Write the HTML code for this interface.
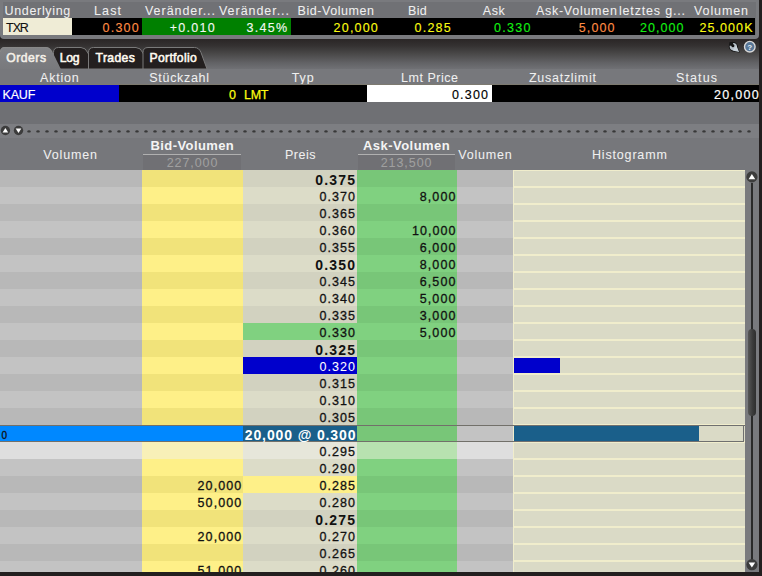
<!DOCTYPE html><html><head><meta charset="utf-8"><style>
html,body{margin:0;padding:0;width:762px;height:576px;overflow:hidden;background:#231f1f}
div,svg{position:absolute;box-sizing:border-box}
.t{white-space:nowrap;font-family:"Liberation Sans",sans-serif}
</style></head><body>
<div style="left:0px;top:0px;width:762px;height:576px;background:#231f1f;"></div>
<div style="left:0;top:0;width:758.5px;height:38.5px;background:#797a7e;border-radius:0 0 4px 4px"></div>
<div style="left:2.5px;top:1.5px;width:753.5px;height:33.5px;background:#707175;"></div>
<div style="left:3px;top:18px;width:69px;height:17px;background:#efecd6;"></div>
<div style="left:72px;top:18px;width:70px;height:17px;background:#000;"></div>
<div style="left:142px;top:18px;width:149px;height:17px;background:#008000;"></div>
<div style="left:291px;top:18px;width:464px;height:17px;background:#000;"></div>
<div class="t" style="left:4.50px;top:4.48px;font-size:12.5px;line-height:14.37px;letter-spacing:0.672px;color:#f0f0f0;-webkit-text-stroke:0.05px #f0f0f0;">Underlying</div>
<div class="t" style="left:94.00px;top:4.48px;font-size:12.5px;line-height:14.37px;letter-spacing:1.125px;color:#f0f0f0;-webkit-text-stroke:0.05px #f0f0f0;">Last</div>
<div class="t" style="left:145.00px;top:4.48px;font-size:12.5px;line-height:14.37px;letter-spacing:0.956px;color:#f0f0f0;-webkit-text-stroke:0.05px #f0f0f0;">Veränder...</div>
<div class="t" style="left:219.00px;top:4.48px;font-size:12.5px;line-height:14.37px;letter-spacing:0.956px;color:#f0f0f0;-webkit-text-stroke:0.05px #f0f0f0;">Veränder...</div>
<div class="t" style="left:297.50px;top:4.48px;font-size:12.5px;line-height:14.37px;letter-spacing:0.562px;color:#f0f0f0;-webkit-text-stroke:0.05px #f0f0f0;">Bid-Volumen</div>
<div class="t" style="left:408.00px;top:4.48px;font-size:12.5px;line-height:14.37px;letter-spacing:0.319px;color:#f0f0f0;-webkit-text-stroke:0.05px #f0f0f0;">Bid</div>
<div class="t" style="left:482.80px;top:4.48px;font-size:12.5px;line-height:14.37px;letter-spacing:0.562px;color:#f0f0f0;-webkit-text-stroke:0.05px #f0f0f0;">Ask</div>
<div class="t" style="left:535.90px;top:4.48px;font-size:12.5px;line-height:14.37px;letter-spacing:0.738px;color:#f0f0f0;-webkit-text-stroke:0.05px #f0f0f0;">Ask-Volumen</div>
<div class="t" style="left:619.00px;top:4.48px;font-size:12.5px;line-height:14.37px;letter-spacing:0.818px;color:#f0f0f0;-webkit-text-stroke:0.05px #f0f0f0;">letztes g...</div>
<div class="t" style="left:694.00px;top:4.48px;font-size:12.5px;line-height:14.37px;letter-spacing:0.896px;color:#f0f0f0;-webkit-text-stroke:0.05px #f0f0f0;">Volumen</div>
<div class="t" style="left:6.10px;top:21.48px;font-size:12.5px;line-height:14.37px;letter-spacing:-1.100px;color:#111;-webkit-text-stroke:0.12px #111;">TXR</div>
<div class="t" style="left:102.60px;top:21.48px;font-size:12.5px;line-height:14.37px;letter-spacing:1.197px;color:#ff8c44;-webkit-text-stroke:0.12px #ff8c44;">0.300</div>
<div class="t" style="left:169.70px;top:21.48px;font-size:12.5px;line-height:14.37px;letter-spacing:1.308px;color:#f4f8f4;-webkit-text-stroke:0.12px #f4f8f4;">+0.010</div>
<div class="t" style="left:246.50px;top:21.48px;font-size:12.5px;line-height:14.37px;letter-spacing:1.266px;color:#f4f8f4;-webkit-text-stroke:0.12px #f4f8f4;">3.45%</div>
<div class="t" style="left:333.60px;top:21.48px;font-size:12.5px;line-height:14.37px;letter-spacing:1.190px;color:#fcfc10;-webkit-text-stroke:0.12px #fcfc10;">20,000</div>
<div class="t" style="left:414.60px;top:21.48px;font-size:12.5px;line-height:14.37px;letter-spacing:1.197px;color:#fcfc10;-webkit-text-stroke:0.12px #fcfc10;">0.285</div>
<div class="t" style="left:494.00px;top:21.48px;font-size:12.5px;line-height:14.37px;letter-spacing:1.272px;color:#12f012;-webkit-text-stroke:0.12px #12f012;">0.330</div>
<div class="t" style="left:578.70px;top:21.48px;font-size:12.5px;line-height:14.37px;letter-spacing:1.147px;color:#ff8c44;-webkit-text-stroke:0.12px #ff8c44;">5,000</div>
<div class="t" style="left:640.00px;top:21.48px;font-size:12.5px;line-height:14.37px;letter-spacing:1.050px;color:#12f012;-webkit-text-stroke:0.12px #12f012;">20,000</div>
<div class="t" style="left:699.40px;top:21.48px;font-size:12.5px;line-height:14.37px;letter-spacing:1.090px;color:#fcfc10;-webkit-text-stroke:0.12px #fcfc10;">25.000K</div>
<div style="left:0;top:38.5px;width:759px;height:30px;background:linear-gradient(#2a2626 0%,#343131 22%,#4a4949 50%,#616164 78%,#707175 100%)"></div>
<svg style="position:absolute;left:0;top:0" width="762" height="576">
<path d="M53.5,69 L53.5,52.5 Q53.5,47.5 58.5,47.5 L81,47.5 Q85.5,47.5 88,53 L95,69 Z" fill="#231f1f" stroke="#7a7a7a" stroke-width="1"/>
<path d="M88.5,69 L88.5,52.5 Q88.5,47.5 93.5,47.5 L136,47.5 Q140.5,47.5 143,53 L150,69 Z" fill="#231f1f" stroke="#7a7a7a" stroke-width="1"/>
<path d="M143,69 L143,52.5 Q143,47.5 148,47.5 L194.5,47.5 Q199,47.5 201,52.5 L207,69 Z" fill="#231f1f" stroke="#7a7a7a" stroke-width="1"/>
<defs><linearGradient id="tg" x1="0" y1="0" x2="0" y2="1"><stop offset="0" stop-color="#828386"/><stop offset="1" stop-color="#78797d"/></linearGradient></defs>
<path d="M0,69 L0,52 Q0,47 5,47 L46,47 Q50,47 52.5,52 L60.8,69 Z" fill="url(#tg)"/>
<path d="M0.5,52 Q0.5,47.5 5,47.5 L46,47.5 Q49.7,47.5 52,52" fill="none" stroke="#888" stroke-width="1"/>
<g>
<circle cx="733.3" cy="46.6" r="4.5" fill="#121212"/>
<path d="M736.8,44.6 L739.8,52.6 L731.6,51.2 Z" fill="#121212"/>
<circle cx="733.3" cy="46.6" r="3.6" fill="#b6c0c8"/>
<path d="M736.4,45.6 L739.1,52 L732.4,50.4 Z" fill="#c8d2da"/>
<circle cx="732.9" cy="45.7" r="1.5" fill="#141414"/>
<path d="M733.6,46.2 L729.2,45.4 L729.4,42.2 L732.8,41.8 Z" fill="#151515"/>
</g>
<circle cx="749.8" cy="46.7" r="5.3" fill="#587696" stroke="#d8d8d8" stroke-width="1.4"/>
<text x="749.8" y="49.8" font-size="8" font-weight="bold" text-anchor="middle" fill="#e8eef4" font-family="Liberation Sans">?</text>
</svg>
<div class="t" style="left:6.30px;top:51.46px;font-size:12.2px;line-height:14.03px;letter-spacing:0.490px;color:#f4f0e8;-webkit-text-stroke:0.55px #f4f0e8;">Orders</div>
<div class="t" style="left:59.70px;top:51.46px;font-size:12.2px;line-height:14.03px;letter-spacing:-0.306px;color:#fffaf0;-webkit-text-stroke:0.55px #fffaf0;">Log</div>
<div class="t" style="left:95.60px;top:51.46px;font-size:12.2px;line-height:14.03px;letter-spacing:0.340px;color:#fffaf0;-webkit-text-stroke:0.55px #fffaf0;">Trades</div>
<div class="t" style="left:149.50px;top:51.46px;font-size:12.2px;line-height:14.03px;letter-spacing:0.314px;color:#fffaf0;-webkit-text-stroke:0.55px #fffaf0;">Portfolio</div>
<div style="left:0px;top:68.5px;width:759px;height:16.5px;background:#77787c;"></div>
<div class="t" style="left:40.00px;top:71.18px;font-size:12.5px;line-height:14.37px;letter-spacing:0.790px;color:#f0f0f0;-webkit-text-stroke:0.05px #f0f0f0;">Aktion</div>
<div class="t" style="left:149.30px;top:71.18px;font-size:12.5px;line-height:14.37px;letter-spacing:0.689px;color:#f0f0f0;-webkit-text-stroke:0.05px #f0f0f0;">Stückzahl</div>
<div class="t" style="left:291.70px;top:71.18px;font-size:12.5px;line-height:14.37px;letter-spacing:0.963px;color:#f0f0f0;-webkit-text-stroke:0.05px #f0f0f0;">Typ</div>
<div class="t" style="left:401.00px;top:71.18px;font-size:12.5px;line-height:14.37px;letter-spacing:0.523px;color:#f0f0f0;-webkit-text-stroke:0.05px #f0f0f0;">Lmt Price</div>
<div class="t" style="left:529.00px;top:71.18px;font-size:12.5px;line-height:14.37px;letter-spacing:0.725px;color:#f0f0f0;-webkit-text-stroke:0.05px #f0f0f0;">Zusatzlimit</div>
<div class="t" style="left:676.00px;top:71.18px;font-size:12.5px;line-height:14.37px;letter-spacing:1.113px;color:#f0f0f0;-webkit-text-stroke:0.05px #f0f0f0;">Status</div>
<div style="left:0px;top:84px;width:759px;height:1px;background:#7d7a70;"></div>
<div style="left:0px;top:85px;width:119px;height:17px;background:#0000cc;"></div>
<div style="left:119px;top:85px;width:248px;height:17px;background:#000;"></div>
<div style="left:367px;top:85px;width:125px;height:17px;background:#fff;"></div>
<div style="left:492px;top:85px;width:267px;height:17px;background:#000;"></div>
<div class="t" style="left:2.50px;top:88.28px;font-size:12.5px;line-height:14.37px;letter-spacing:-0.171px;color:#ffffff;-webkit-text-stroke:0.15px #ffffff;">KAUF</div>
<div class="t" style="left:229.00px;top:88.28px;font-size:12.5px;line-height:14.37px;letter-spacing:0.000px;color:#fcfc10;-webkit-text-stroke:0.25px #fcfc10;">0</div>
<div class="t" style="left:244.00px;top:88.28px;font-size:12.5px;line-height:14.37px;letter-spacing:-0.250px;color:#fcfc10;-webkit-text-stroke:0.25px #fcfc10;">LMT</div>
<div class="t" style="left:452.00px;top:88.28px;font-size:12.5px;line-height:14.37px;letter-spacing:1.172px;color:#000;-webkit-text-stroke:0.15px #000;">0.300</div>
<div class="t" style="left:714.00px;top:88.28px;font-size:12.5px;line-height:14.37px;letter-spacing:1.270px;color:#ffffff;-webkit-text-stroke:0.2px #ffffff;">20,000</div>
<div style="left:0px;top:102px;width:759px;height:22px;background:#6f7074;"></div>
<div style="left:0px;top:124px;width:759px;height:14px;background:#7d7e82;"></div>
<svg style="position:absolute;left:0;top:0" width="762" height="576"><circle cx="5.4" cy="130.5" r="4.7" fill="#3c3c3c"/><path d="M2.6,132.6 L8.2,132.6 L5.4,128 Z" fill="#fff"/><circle cx="18.5" cy="130.5" r="4.7" fill="#3c3c3c"/><path d="M15.7,128.4 L21.3,128.4 L18.5,133 Z" fill="#fff"/><ellipse cx="29.0" cy="131.4" rx="1.7" ry="1.2" fill="#383838"/><ellipse cx="38.0" cy="131.4" rx="1.7" ry="1.2" fill="#383838"/><ellipse cx="47.0" cy="131.4" rx="1.7" ry="1.2" fill="#383838"/><ellipse cx="56.0" cy="131.4" rx="1.7" ry="1.2" fill="#383838"/><ellipse cx="65.0" cy="131.4" rx="1.7" ry="1.2" fill="#383838"/><ellipse cx="74.0" cy="131.4" rx="1.7" ry="1.2" fill="#383838"/><ellipse cx="83.0" cy="131.4" rx="1.7" ry="1.2" fill="#383838"/><ellipse cx="92.0" cy="131.4" rx="1.7" ry="1.2" fill="#383838"/><ellipse cx="101.0" cy="131.4" rx="1.7" ry="1.2" fill="#383838"/><ellipse cx="110.0" cy="131.4" rx="1.7" ry="1.2" fill="#383838"/><ellipse cx="119.0" cy="131.4" rx="1.7" ry="1.2" fill="#383838"/><ellipse cx="128.0" cy="131.4" rx="1.7" ry="1.2" fill="#383838"/><ellipse cx="137.0" cy="131.4" rx="1.7" ry="1.2" fill="#383838"/><ellipse cx="146.0" cy="131.4" rx="1.7" ry="1.2" fill="#383838"/><ellipse cx="155.0" cy="131.4" rx="1.7" ry="1.2" fill="#383838"/><ellipse cx="164.0" cy="131.4" rx="1.7" ry="1.2" fill="#383838"/><ellipse cx="173.0" cy="131.4" rx="1.7" ry="1.2" fill="#383838"/><ellipse cx="182.0" cy="131.4" rx="1.7" ry="1.2" fill="#383838"/><ellipse cx="191.0" cy="131.4" rx="1.7" ry="1.2" fill="#383838"/><ellipse cx="200.0" cy="131.4" rx="1.7" ry="1.2" fill="#383838"/><ellipse cx="209.0" cy="131.4" rx="1.7" ry="1.2" fill="#383838"/><ellipse cx="218.0" cy="131.4" rx="1.7" ry="1.2" fill="#383838"/><ellipse cx="227.0" cy="131.4" rx="1.7" ry="1.2" fill="#383838"/><ellipse cx="236.0" cy="131.4" rx="1.7" ry="1.2" fill="#383838"/><ellipse cx="245.0" cy="131.4" rx="1.7" ry="1.2" fill="#383838"/><ellipse cx="254.0" cy="131.4" rx="1.7" ry="1.2" fill="#383838"/><ellipse cx="263.0" cy="131.4" rx="1.7" ry="1.2" fill="#383838"/><ellipse cx="272.0" cy="131.4" rx="1.7" ry="1.2" fill="#383838"/><ellipse cx="281.0" cy="131.4" rx="1.7" ry="1.2" fill="#383838"/><ellipse cx="290.0" cy="131.4" rx="1.7" ry="1.2" fill="#383838"/><ellipse cx="299.0" cy="131.4" rx="1.7" ry="1.2" fill="#383838"/><ellipse cx="308.0" cy="131.4" rx="1.7" ry="1.2" fill="#383838"/><ellipse cx="317.0" cy="131.4" rx="1.7" ry="1.2" fill="#383838"/><ellipse cx="326.0" cy="131.4" rx="1.7" ry="1.2" fill="#383838"/><ellipse cx="335.0" cy="131.4" rx="1.7" ry="1.2" fill="#383838"/><ellipse cx="344.0" cy="131.4" rx="1.7" ry="1.2" fill="#383838"/><ellipse cx="353.0" cy="131.4" rx="1.7" ry="1.2" fill="#383838"/><ellipse cx="362.0" cy="131.4" rx="1.7" ry="1.2" fill="#383838"/><ellipse cx="371.0" cy="131.4" rx="1.7" ry="1.2" fill="#383838"/><ellipse cx="380.0" cy="131.4" rx="1.7" ry="1.2" fill="#383838"/><ellipse cx="389.0" cy="131.4" rx="1.7" ry="1.2" fill="#383838"/><ellipse cx="398.0" cy="131.4" rx="1.7" ry="1.2" fill="#383838"/><ellipse cx="407.0" cy="131.4" rx="1.7" ry="1.2" fill="#383838"/><ellipse cx="416.0" cy="131.4" rx="1.7" ry="1.2" fill="#383838"/><ellipse cx="425.0" cy="131.4" rx="1.7" ry="1.2" fill="#383838"/><ellipse cx="434.0" cy="131.4" rx="1.7" ry="1.2" fill="#383838"/><ellipse cx="443.0" cy="131.4" rx="1.7" ry="1.2" fill="#383838"/><ellipse cx="452.0" cy="131.4" rx="1.7" ry="1.2" fill="#383838"/><ellipse cx="461.0" cy="131.4" rx="1.7" ry="1.2" fill="#383838"/><ellipse cx="470.0" cy="131.4" rx="1.7" ry="1.2" fill="#383838"/><ellipse cx="479.0" cy="131.4" rx="1.7" ry="1.2" fill="#383838"/><ellipse cx="488.0" cy="131.4" rx="1.7" ry="1.2" fill="#383838"/><ellipse cx="497.0" cy="131.4" rx="1.7" ry="1.2" fill="#383838"/><ellipse cx="506.0" cy="131.4" rx="1.7" ry="1.2" fill="#383838"/><ellipse cx="515.0" cy="131.4" rx="1.7" ry="1.2" fill="#383838"/><ellipse cx="524.0" cy="131.4" rx="1.7" ry="1.2" fill="#383838"/><ellipse cx="533.0" cy="131.4" rx="1.7" ry="1.2" fill="#383838"/><ellipse cx="542.0" cy="131.4" rx="1.7" ry="1.2" fill="#383838"/><ellipse cx="551.0" cy="131.4" rx="1.7" ry="1.2" fill="#383838"/><ellipse cx="560.0" cy="131.4" rx="1.7" ry="1.2" fill="#383838"/><ellipse cx="569.0" cy="131.4" rx="1.7" ry="1.2" fill="#383838"/><ellipse cx="578.0" cy="131.4" rx="1.7" ry="1.2" fill="#383838"/><ellipse cx="587.0" cy="131.4" rx="1.7" ry="1.2" fill="#383838"/><ellipse cx="596.0" cy="131.4" rx="1.7" ry="1.2" fill="#383838"/><ellipse cx="605.0" cy="131.4" rx="1.7" ry="1.2" fill="#383838"/><ellipse cx="614.0" cy="131.4" rx="1.7" ry="1.2" fill="#383838"/><ellipse cx="623.0" cy="131.4" rx="1.7" ry="1.2" fill="#383838"/><ellipse cx="632.0" cy="131.4" rx="1.7" ry="1.2" fill="#383838"/><ellipse cx="641.0" cy="131.4" rx="1.7" ry="1.2" fill="#383838"/><ellipse cx="650.0" cy="131.4" rx="1.7" ry="1.2" fill="#383838"/><ellipse cx="659.0" cy="131.4" rx="1.7" ry="1.2" fill="#383838"/><ellipse cx="668.0" cy="131.4" rx="1.7" ry="1.2" fill="#383838"/><ellipse cx="677.0" cy="131.4" rx="1.7" ry="1.2" fill="#383838"/><ellipse cx="686.0" cy="131.4" rx="1.7" ry="1.2" fill="#383838"/><ellipse cx="695.0" cy="131.4" rx="1.7" ry="1.2" fill="#383838"/><ellipse cx="704.0" cy="131.4" rx="1.7" ry="1.2" fill="#383838"/><ellipse cx="713.0" cy="131.4" rx="1.7" ry="1.2" fill="#383838"/><ellipse cx="722.0" cy="131.4" rx="1.7" ry="1.2" fill="#383838"/><ellipse cx="731.0" cy="131.4" rx="1.7" ry="1.2" fill="#383838"/><ellipse cx="740.0" cy="131.4" rx="1.7" ry="1.2" fill="#383838"/><ellipse cx="749.0" cy="131.4" rx="1.7" ry="1.2" fill="#383838"/></svg>
<div style="left:0px;top:138px;width:759px;height:32px;background:#76777b;"></div>
<div class="t" style="left:43.30px;top:147.98px;font-size:12.5px;line-height:14.37px;letter-spacing:0.829px;color:#f0f0f0;-webkit-text-stroke:0.05px #f0f0f0;">Volumen</div>
<div class="t" style="left:150.50px;top:138.62px;font-size:13px;line-height:14.95px;letter-spacing:0.411px;color:#f4f4f4;font-weight:bold;">Bid-Volumen</div>
<div style="left:142.8px;top:154px;width:98.19999999999999px;height:1px;background:#b0b0b0;"></div>
<div style="left:143px;top:155px;width:98px;height:15px;background:#707074;"></div>
<div class="t" style="left:166.70px;top:156.48px;font-size:12.5px;line-height:14.37px;letter-spacing:0.919px;color:#a0a0a0;-webkit-text-stroke:0.05px #a0a0a0;">227,000</div>
<div class="t" style="left:285.00px;top:147.98px;font-size:12.5px;line-height:14.37px;letter-spacing:0.475px;color:#f0f0f0;-webkit-text-stroke:0.05px #f0f0f0;">Preis</div>
<div class="t" style="left:363.00px;top:138.72px;font-size:13px;line-height:14.95px;letter-spacing:0.457px;color:#f4f4f4;font-weight:bold;">Ask-Volumen</div>
<div style="left:357.8px;top:154px;width:96.89999999999998px;height:1px;background:#b0b0b0;"></div>
<div style="left:358px;top:155px;width:97px;height:15px;background:#707074;"></div>
<div class="t" style="left:380.70px;top:156.18px;font-size:12.5px;line-height:14.37px;letter-spacing:0.935px;color:#a0a0a0;-webkit-text-stroke:0.05px #a0a0a0;">213,500</div>
<div class="t" style="left:458.20px;top:147.98px;font-size:12.5px;line-height:14.37px;letter-spacing:0.829px;color:#f0f0f0;-webkit-text-stroke:0.05px #f0f0f0;">Volumen</div>
<div class="t" style="left:592.00px;top:148.28px;font-size:12.5px;line-height:14.37px;letter-spacing:0.825px;color:#f0f0f0;-webkit-text-stroke:0.05px #f0f0f0;">Histogramm</div>
<div style="left:0px;top:170px;width:142px;height:17px;background:#b8b8b8;"></div>
<div style="left:142px;top:170px;width:101px;height:17px;background:#f1e37a;"></div>
<div style="left:243px;top:170px;width:114px;height:17px;background:#d2d2c0;"></div>
<div style="left:357px;top:170px;width:100px;height:17px;background:#78c678;"></div>
<div style="left:457px;top:170px;width:56px;height:17px;background:#b8b8b8;"></div>
<div style="left:513px;top:170px;width:232px;height:17px;background:#dadac6;"></div>
<div class="t" style="left:315.30px;top:172.10px;font-size:14px;line-height:16.10px;letter-spacing:1.159px;color:#111;font-weight:bold;">0.375</div>
<div style="left:0px;top:187px;width:142px;height:17px;background:#c3c3c3;"></div>
<div style="left:142px;top:187px;width:101px;height:17px;background:#fef088;"></div>
<div style="left:243px;top:187px;width:114px;height:17px;background:#dcdcc8;"></div>
<div style="left:357px;top:187px;width:100px;height:17px;background:#80d180;"></div>
<div style="left:457px;top:187px;width:56px;height:17px;background:#c3c3c3;"></div>
<div style="left:513px;top:187px;width:232px;height:17px;background:#dadac6;"></div>
<div style="left:513px;top:186px;width:232px;height:2px;background:#f0edcc;"></div>
<div class="t" style="left:319.40px;top:190.48px;font-size:12.5px;line-height:14.37px;letter-spacing:1.072px;color:#111;-webkit-text-stroke:0.3px #111;">0.370</div>
<div class="t" style="left:419.80px;top:190.48px;font-size:12.5px;line-height:14.37px;letter-spacing:1.072px;color:#111;-webkit-text-stroke:0.3px #111;">8,000</div>
<div style="left:0px;top:204px;width:142px;height:17px;background:#b8b8b8;"></div>
<div style="left:142px;top:204px;width:101px;height:17px;background:#f1e37a;"></div>
<div style="left:243px;top:204px;width:114px;height:17px;background:#d2d2c0;"></div>
<div style="left:357px;top:204px;width:100px;height:17px;background:#78c678;"></div>
<div style="left:457px;top:204px;width:56px;height:17px;background:#b8b8b8;"></div>
<div style="left:513px;top:204px;width:232px;height:17px;background:#dadac6;"></div>
<div style="left:513px;top:203px;width:232px;height:2px;background:#f0edcc;"></div>
<div class="t" style="left:319.40px;top:207.48px;font-size:12.5px;line-height:14.37px;letter-spacing:1.072px;color:#111;-webkit-text-stroke:0.3px #111;">0.365</div>
<div style="left:0px;top:221px;width:142px;height:17px;background:#c3c3c3;"></div>
<div style="left:142px;top:221px;width:101px;height:17px;background:#fef088;"></div>
<div style="left:243px;top:221px;width:114px;height:17px;background:#dcdcc8;"></div>
<div style="left:357px;top:221px;width:100px;height:17px;background:#80d180;"></div>
<div style="left:457px;top:221px;width:56px;height:17px;background:#c3c3c3;"></div>
<div style="left:513px;top:221px;width:232px;height:17px;background:#dadac6;"></div>
<div style="left:513px;top:220px;width:232px;height:2px;background:#f0edcc;"></div>
<div class="t" style="left:319.40px;top:224.48px;font-size:12.5px;line-height:14.37px;letter-spacing:1.072px;color:#111;-webkit-text-stroke:0.3px #111;">0.360</div>
<div class="t" style="left:412.10px;top:224.48px;font-size:12.5px;line-height:14.37px;letter-spacing:1.010px;color:#111;-webkit-text-stroke:0.3px #111;">10,000</div>
<div style="left:0px;top:238px;width:142px;height:17px;background:#b8b8b8;"></div>
<div style="left:142px;top:238px;width:101px;height:17px;background:#f1e37a;"></div>
<div style="left:243px;top:238px;width:114px;height:17px;background:#d2d2c0;"></div>
<div style="left:357px;top:238px;width:100px;height:17px;background:#78c678;"></div>
<div style="left:457px;top:238px;width:56px;height:17px;background:#b8b8b8;"></div>
<div style="left:513px;top:238px;width:232px;height:17px;background:#dadac6;"></div>
<div style="left:513px;top:237px;width:232px;height:2px;background:#f0edcc;"></div>
<div class="t" style="left:319.40px;top:241.48px;font-size:12.5px;line-height:14.37px;letter-spacing:1.072px;color:#111;-webkit-text-stroke:0.3px #111;">0.355</div>
<div class="t" style="left:419.80px;top:241.48px;font-size:12.5px;line-height:14.37px;letter-spacing:1.072px;color:#111;-webkit-text-stroke:0.3px #111;">6,000</div>
<div style="left:0px;top:255px;width:142px;height:17px;background:#c3c3c3;"></div>
<div style="left:142px;top:255px;width:101px;height:17px;background:#fef088;"></div>
<div style="left:243px;top:255px;width:114px;height:17px;background:#dcdcc8;"></div>
<div style="left:357px;top:255px;width:100px;height:17px;background:#80d180;"></div>
<div style="left:457px;top:255px;width:56px;height:17px;background:#c3c3c3;"></div>
<div style="left:513px;top:255px;width:232px;height:17px;background:#dadac6;"></div>
<div style="left:513px;top:254px;width:232px;height:2px;background:#f0edcc;"></div>
<div class="t" style="left:315.30px;top:257.10px;font-size:14px;line-height:16.10px;letter-spacing:1.159px;color:#111;font-weight:bold;">0.350</div>
<div class="t" style="left:419.80px;top:258.48px;font-size:12.5px;line-height:14.37px;letter-spacing:1.072px;color:#111;-webkit-text-stroke:0.3px #111;">8,000</div>
<div style="left:0px;top:272px;width:142px;height:17px;background:#b8b8b8;"></div>
<div style="left:142px;top:272px;width:101px;height:17px;background:#f1e37a;"></div>
<div style="left:243px;top:272px;width:114px;height:17px;background:#d2d2c0;"></div>
<div style="left:357px;top:272px;width:100px;height:17px;background:#78c678;"></div>
<div style="left:457px;top:272px;width:56px;height:17px;background:#b8b8b8;"></div>
<div style="left:513px;top:272px;width:232px;height:17px;background:#dadac6;"></div>
<div style="left:513px;top:271px;width:232px;height:2px;background:#f0edcc;"></div>
<div class="t" style="left:319.40px;top:275.48px;font-size:12.5px;line-height:14.37px;letter-spacing:1.072px;color:#111;-webkit-text-stroke:0.3px #111;">0.345</div>
<div class="t" style="left:419.80px;top:275.48px;font-size:12.5px;line-height:14.37px;letter-spacing:1.072px;color:#111;-webkit-text-stroke:0.3px #111;">6,500</div>
<div style="left:0px;top:289px;width:142px;height:17px;background:#c3c3c3;"></div>
<div style="left:142px;top:289px;width:101px;height:17px;background:#fef088;"></div>
<div style="left:243px;top:289px;width:114px;height:17px;background:#dcdcc8;"></div>
<div style="left:357px;top:289px;width:100px;height:17px;background:#80d180;"></div>
<div style="left:457px;top:289px;width:56px;height:17px;background:#c3c3c3;"></div>
<div style="left:513px;top:289px;width:232px;height:17px;background:#dadac6;"></div>
<div style="left:513px;top:288px;width:232px;height:2px;background:#f0edcc;"></div>
<div class="t" style="left:319.40px;top:292.48px;font-size:12.5px;line-height:14.37px;letter-spacing:1.072px;color:#111;-webkit-text-stroke:0.3px #111;">0.340</div>
<div class="t" style="left:419.80px;top:292.48px;font-size:12.5px;line-height:14.37px;letter-spacing:1.072px;color:#111;-webkit-text-stroke:0.3px #111;">5,000</div>
<div style="left:0px;top:306px;width:142px;height:17px;background:#b8b8b8;"></div>
<div style="left:142px;top:306px;width:101px;height:17px;background:#f1e37a;"></div>
<div style="left:243px;top:306px;width:114px;height:17px;background:#d2d2c0;"></div>
<div style="left:357px;top:306px;width:100px;height:17px;background:#78c678;"></div>
<div style="left:457px;top:306px;width:56px;height:17px;background:#b8b8b8;"></div>
<div style="left:513px;top:306px;width:232px;height:17px;background:#dadac6;"></div>
<div style="left:513px;top:305px;width:232px;height:2px;background:#f0edcc;"></div>
<div class="t" style="left:319.40px;top:309.48px;font-size:12.5px;line-height:14.37px;letter-spacing:1.072px;color:#111;-webkit-text-stroke:0.3px #111;">0.335</div>
<div class="t" style="left:419.80px;top:309.48px;font-size:12.5px;line-height:14.37px;letter-spacing:1.072px;color:#111;-webkit-text-stroke:0.3px #111;">3,000</div>
<div style="left:0px;top:323px;width:142px;height:17px;background:#c3c3c3;"></div>
<div style="left:142px;top:323px;width:101px;height:17px;background:#fef088;"></div>
<div style="left:243px;top:323px;width:114px;height:17px;background:#80d180;"></div>
<div style="left:357px;top:323px;width:100px;height:17px;background:#80d180;"></div>
<div style="left:457px;top:323px;width:56px;height:17px;background:#c3c3c3;"></div>
<div style="left:513px;top:323px;width:232px;height:17px;background:#dadac6;"></div>
<div style="left:513px;top:322px;width:232px;height:2px;background:#f0edcc;"></div>
<div class="t" style="left:319.40px;top:326.48px;font-size:12.5px;line-height:14.37px;letter-spacing:1.072px;color:#111;-webkit-text-stroke:0.3px #111;">0.330</div>
<div class="t" style="left:419.80px;top:326.48px;font-size:12.5px;line-height:14.37px;letter-spacing:1.072px;color:#111;-webkit-text-stroke:0.3px #111;">5,000</div>
<div style="left:0px;top:340px;width:142px;height:17px;background:#b8b8b8;"></div>
<div style="left:142px;top:340px;width:101px;height:17px;background:#f1e37a;"></div>
<div style="left:243px;top:340px;width:114px;height:17px;background:#d2d2c0;"></div>
<div style="left:357px;top:340px;width:100px;height:17px;background:#78c678;"></div>
<div style="left:457px;top:340px;width:56px;height:17px;background:#b8b8b8;"></div>
<div style="left:513px;top:340px;width:232px;height:17px;background:#dadac6;"></div>
<div style="left:513px;top:339px;width:232px;height:2px;background:#f0edcc;"></div>
<div class="t" style="left:315.30px;top:342.10px;font-size:14px;line-height:16.10px;letter-spacing:1.159px;color:#111;font-weight:bold;">0.325</div>
<div style="left:0px;top:357px;width:142px;height:17px;background:#c3c3c3;"></div>
<div style="left:142px;top:357px;width:101px;height:17px;background:#fef088;"></div>
<div style="left:243px;top:357px;width:114px;height:17px;background:#0000cc;"></div>
<div style="left:357px;top:357px;width:100px;height:17px;background:#80d180;"></div>
<div style="left:457px;top:357px;width:56px;height:17px;background:#c3c3c3;"></div>
<div style="left:513px;top:357px;width:232px;height:17px;background:#dadac6;"></div>
<div style="left:513px;top:356px;width:232px;height:2px;background:#f0edcc;"></div>
<div class="t" style="left:319.40px;top:360.48px;font-size:12.5px;line-height:14.37px;letter-spacing:1.072px;color:#fff;-webkit-text-stroke:0.05px #fff;">0.320</div>
<div style="left:514px;top:358px;width:46px;height:15px;background:#0000cc;"></div>
<div style="left:0px;top:374px;width:142px;height:17px;background:#b8b8b8;"></div>
<div style="left:142px;top:374px;width:101px;height:17px;background:#f1e37a;"></div>
<div style="left:243px;top:374px;width:114px;height:17px;background:#d2d2c0;"></div>
<div style="left:357px;top:374px;width:100px;height:17px;background:#78c678;"></div>
<div style="left:457px;top:374px;width:56px;height:17px;background:#b8b8b8;"></div>
<div style="left:513px;top:374px;width:232px;height:17px;background:#dadac6;"></div>
<div style="left:513px;top:373px;width:232px;height:2px;background:#f0edcc;"></div>
<div class="t" style="left:319.40px;top:377.48px;font-size:12.5px;line-height:14.37px;letter-spacing:1.072px;color:#111;-webkit-text-stroke:0.3px #111;">0.315</div>
<div style="left:0px;top:391px;width:142px;height:17px;background:#c3c3c3;"></div>
<div style="left:142px;top:391px;width:101px;height:17px;background:#fef088;"></div>
<div style="left:243px;top:391px;width:114px;height:17px;background:#dcdcc8;"></div>
<div style="left:357px;top:391px;width:100px;height:17px;background:#80d180;"></div>
<div style="left:457px;top:391px;width:56px;height:17px;background:#c3c3c3;"></div>
<div style="left:513px;top:391px;width:232px;height:17px;background:#dadac6;"></div>
<div style="left:513px;top:390px;width:232px;height:2px;background:#f0edcc;"></div>
<div class="t" style="left:319.40px;top:394.48px;font-size:12.5px;line-height:14.37px;letter-spacing:1.072px;color:#111;-webkit-text-stroke:0.3px #111;">0.310</div>
<div style="left:0px;top:408px;width:142px;height:17px;background:#b8b8b8;"></div>
<div style="left:142px;top:408px;width:101px;height:17px;background:#f1e37a;"></div>
<div style="left:243px;top:408px;width:114px;height:17px;background:#d2d2c0;"></div>
<div style="left:357px;top:408px;width:100px;height:17px;background:#78c678;"></div>
<div style="left:457px;top:408px;width:56px;height:17px;background:#b8b8b8;"></div>
<div style="left:513px;top:408px;width:232px;height:17px;background:#dadac6;"></div>
<div style="left:513px;top:407px;width:232px;height:2px;background:#f0edcc;"></div>
<div class="t" style="left:319.40px;top:411.48px;font-size:12.5px;line-height:14.37px;letter-spacing:1.072px;color:#111;-webkit-text-stroke:0.3px #111;">0.305</div>
<div style="left:0px;top:425px;width:142px;height:17px;background:#c3c3c3;"></div>
<div style="left:142px;top:425px;width:101px;height:17px;background:#fef088;"></div>
<div style="left:243px;top:425px;width:114px;height:17px;background:#dcdcc8;"></div>
<div style="left:357px;top:425px;width:100px;height:17px;background:#78c678;"></div>
<div style="left:457px;top:425px;width:56px;height:17px;background:#c3c3c3;"></div>
<div style="left:513px;top:425px;width:232px;height:17px;background:#dadac6;"></div>
<div style="left:513px;top:424px;width:232px;height:2px;background:#f0edcc;"></div>
<div style="left:0px;top:425px;width:243px;height:17px;background:#0088ff;"></div>
<div style="left:243px;top:425px;width:114px;height:17px;background:#1a5f8a;"></div>
<div style="left:0px;top:425px;width:745px;height:0.8000000000000114px;background:#72706a;"></div>
<div style="left:0px;top:441.2px;width:745px;height:0.8000000000000114px;background:#72706a;"></div>
<div class="t" style="left:1.50px;top:429.58px;font-size:10px;line-height:11.50px;letter-spacing:0.000px;color:#101010;-webkit-text-stroke:0.3px #101010;">0</div>
<div class="t" style="left:244.80px;top:426.60px;font-size:14px;line-height:16.10px;letter-spacing:0.876px;color:#ffffff;font-weight:bold;">20,000 @ 0.300</div>
<div style="left:0px;top:442px;width:142px;height:17px;background:#dedede;"></div>
<div style="left:142px;top:442px;width:101px;height:17px;background:#f8f0b8;"></div>
<div style="left:243px;top:442px;width:114px;height:17px;background:#e6e6da;"></div>
<div style="left:357px;top:442px;width:100px;height:17px;background:#b8e2b0;"></div>
<div style="left:457px;top:442px;width:56px;height:17px;background:#dedede;"></div>
<div style="left:513px;top:442px;width:232px;height:17px;background:#dadac6;"></div>
<div style="left:513px;top:441px;width:232px;height:2px;background:#f0edcc;"></div>
<div class="t" style="left:319.40px;top:445.48px;font-size:12.5px;line-height:14.37px;letter-spacing:1.072px;color:#111;-webkit-text-stroke:0.3px #111;">0.295</div>
<div style="left:0px;top:459px;width:142px;height:17px;background:#c3c3c3;"></div>
<div style="left:142px;top:459px;width:101px;height:17px;background:#fef088;"></div>
<div style="left:243px;top:459px;width:114px;height:17px;background:#dcdcc8;"></div>
<div style="left:357px;top:459px;width:100px;height:17px;background:#80d180;"></div>
<div style="left:457px;top:459px;width:56px;height:17px;background:#c3c3c3;"></div>
<div style="left:513px;top:459px;width:232px;height:17px;background:#dadac6;"></div>
<div style="left:513px;top:458px;width:232px;height:2px;background:#f0edcc;"></div>
<div class="t" style="left:319.40px;top:462.48px;font-size:12.5px;line-height:14.37px;letter-spacing:1.072px;color:#111;-webkit-text-stroke:0.3px #111;">0.290</div>
<div style="left:0px;top:476px;width:142px;height:17px;background:#b8b8b8;"></div>
<div style="left:142px;top:476px;width:101px;height:17px;background:#f1e37a;"></div>
<div style="left:243px;top:476px;width:114px;height:17px;background:#fef088;"></div>
<div style="left:357px;top:476px;width:100px;height:17px;background:#78c678;"></div>
<div style="left:457px;top:476px;width:56px;height:17px;background:#b8b8b8;"></div>
<div style="left:513px;top:476px;width:232px;height:17px;background:#dadac6;"></div>
<div style="left:513px;top:475px;width:232px;height:2px;background:#f0edcc;"></div>
<div class="t" style="left:319.40px;top:479.48px;font-size:12.5px;line-height:14.37px;letter-spacing:1.072px;color:#111;-webkit-text-stroke:0.3px #111;">0.285</div>
<div class="t" style="left:197.60px;top:479.28px;font-size:12.5px;line-height:14.37px;letter-spacing:1.070px;color:#111;-webkit-text-stroke:0.3px #111;">20,000</div>
<div style="left:0px;top:493px;width:142px;height:17px;background:#c3c3c3;"></div>
<div style="left:142px;top:493px;width:101px;height:17px;background:#fef088;"></div>
<div style="left:243px;top:493px;width:114px;height:17px;background:#dcdcc8;"></div>
<div style="left:357px;top:493px;width:100px;height:17px;background:#80d180;"></div>
<div style="left:457px;top:493px;width:56px;height:17px;background:#c3c3c3;"></div>
<div style="left:513px;top:493px;width:232px;height:17px;background:#dadac6;"></div>
<div style="left:513px;top:492px;width:232px;height:2px;background:#f0edcc;"></div>
<div class="t" style="left:319.40px;top:496.48px;font-size:12.5px;line-height:14.37px;letter-spacing:1.072px;color:#111;-webkit-text-stroke:0.3px #111;">0.280</div>
<div class="t" style="left:197.60px;top:496.28px;font-size:12.5px;line-height:14.37px;letter-spacing:1.070px;color:#111;-webkit-text-stroke:0.3px #111;">50,000</div>
<div style="left:0px;top:510px;width:142px;height:17px;background:#b8b8b8;"></div>
<div style="left:142px;top:510px;width:101px;height:17px;background:#f1e37a;"></div>
<div style="left:243px;top:510px;width:114px;height:17px;background:#d2d2c0;"></div>
<div style="left:357px;top:510px;width:100px;height:17px;background:#78c678;"></div>
<div style="left:457px;top:510px;width:56px;height:17px;background:#b8b8b8;"></div>
<div style="left:513px;top:510px;width:232px;height:17px;background:#dadac6;"></div>
<div style="left:513px;top:509px;width:232px;height:2px;background:#f0edcc;"></div>
<div class="t" style="left:315.30px;top:512.10px;font-size:14px;line-height:16.10px;letter-spacing:1.159px;color:#111;font-weight:bold;">0.275</div>
<div style="left:0px;top:527px;width:142px;height:17px;background:#c3c3c3;"></div>
<div style="left:142px;top:527px;width:101px;height:17px;background:#fef088;"></div>
<div style="left:243px;top:527px;width:114px;height:17px;background:#dcdcc8;"></div>
<div style="left:357px;top:527px;width:100px;height:17px;background:#80d180;"></div>
<div style="left:457px;top:527px;width:56px;height:17px;background:#c3c3c3;"></div>
<div style="left:513px;top:527px;width:232px;height:17px;background:#dadac6;"></div>
<div style="left:513px;top:526px;width:232px;height:2px;background:#f0edcc;"></div>
<div class="t" style="left:319.40px;top:530.48px;font-size:12.5px;line-height:14.37px;letter-spacing:1.072px;color:#111;-webkit-text-stroke:0.3px #111;">0.270</div>
<div class="t" style="left:197.60px;top:530.28px;font-size:12.5px;line-height:14.37px;letter-spacing:1.070px;color:#111;-webkit-text-stroke:0.3px #111;">20,000</div>
<div style="left:0px;top:544px;width:142px;height:17px;background:#b8b8b8;"></div>
<div style="left:142px;top:544px;width:101px;height:17px;background:#f1e37a;"></div>
<div style="left:243px;top:544px;width:114px;height:17px;background:#d2d2c0;"></div>
<div style="left:357px;top:544px;width:100px;height:17px;background:#78c678;"></div>
<div style="left:457px;top:544px;width:56px;height:17px;background:#b8b8b8;"></div>
<div style="left:513px;top:544px;width:232px;height:17px;background:#dadac6;"></div>
<div style="left:513px;top:543px;width:232px;height:2px;background:#f0edcc;"></div>
<div class="t" style="left:319.40px;top:547.48px;font-size:12.5px;line-height:14.37px;letter-spacing:1.072px;color:#111;-webkit-text-stroke:0.3px #111;">0.265</div>
<div style="left:0px;top:561px;width:142px;height:17px;background:#c3c3c3;"></div>
<div style="left:142px;top:561px;width:101px;height:17px;background:#fef088;"></div>
<div style="left:243px;top:561px;width:114px;height:17px;background:#dcdcc8;"></div>
<div style="left:357px;top:561px;width:100px;height:17px;background:#80d180;"></div>
<div style="left:457px;top:561px;width:56px;height:17px;background:#c3c3c3;"></div>
<div style="left:513px;top:561px;width:232px;height:17px;background:#dadac6;"></div>
<div style="left:513px;top:560px;width:232px;height:2px;background:#f0edcc;"></div>
<div class="t" style="left:319.40px;top:564.48px;font-size:12.5px;line-height:14.37px;letter-spacing:1.072px;color:#111;-webkit-text-stroke:0.3px #111;">0.260</div>
<div class="t" style="left:197.60px;top:564.28px;font-size:12.5px;line-height:14.37px;letter-spacing:1.070px;color:#111;-webkit-text-stroke:0.3px #111;">51,000</div>
<div style="left:513px;top:170px;width:1px;height:402px;background:#f0edcc;"></div>
<div style="left:513px;top:425px;width:231px;height:17px;background:#dadac6;border:1px solid #6f6f6f"></div>
<div style="left:514px;top:426px;width:185px;height:15px;background:#1a5f8a;"></div>
<div style="left:513px;top:426px;width:1px;height:15px;background:#f0edcc;"></div>
<div style="left:513px;top:170px;width:232px;height:1px;background:#f0edcc;"></div>
<div style="left:745px;top:170px;width:14px;height:402px;background:#797a7e;"></div>
<div style="left:751px;top:183px;width:2px;height:377px;background:#2a2a2a;"></div>
<div style="left:748.3px;top:329px;width:7.7px;height:86.6px;border-radius:4px;background:linear-gradient(90deg,#575757,#3a3a3a 60%,#2e2e2e)"></div>
<svg style="position:absolute;left:0;top:0" width="762" height="576">
<circle cx="751.9" cy="176.9" r="5.6" fill="#3c3c3c"/><path d="M748.6,179.2 L755.2,179.2 L751.9,174 Z" fill="#fff"/>
<circle cx="751.9" cy="564.7" r="5.6" fill="#3c3c3c"/><path d="M748.6,562.4 L755.2,562.4 L751.9,567.6 Z" fill="#fff"/>
</svg>
<div style="left:0px;top:572px;width:762px;height:4px;background:#231f1f;"></div>
<div style="left:759px;top:0px;width:3px;height:576px;background:#231f1f;"></div>
</body></html>
